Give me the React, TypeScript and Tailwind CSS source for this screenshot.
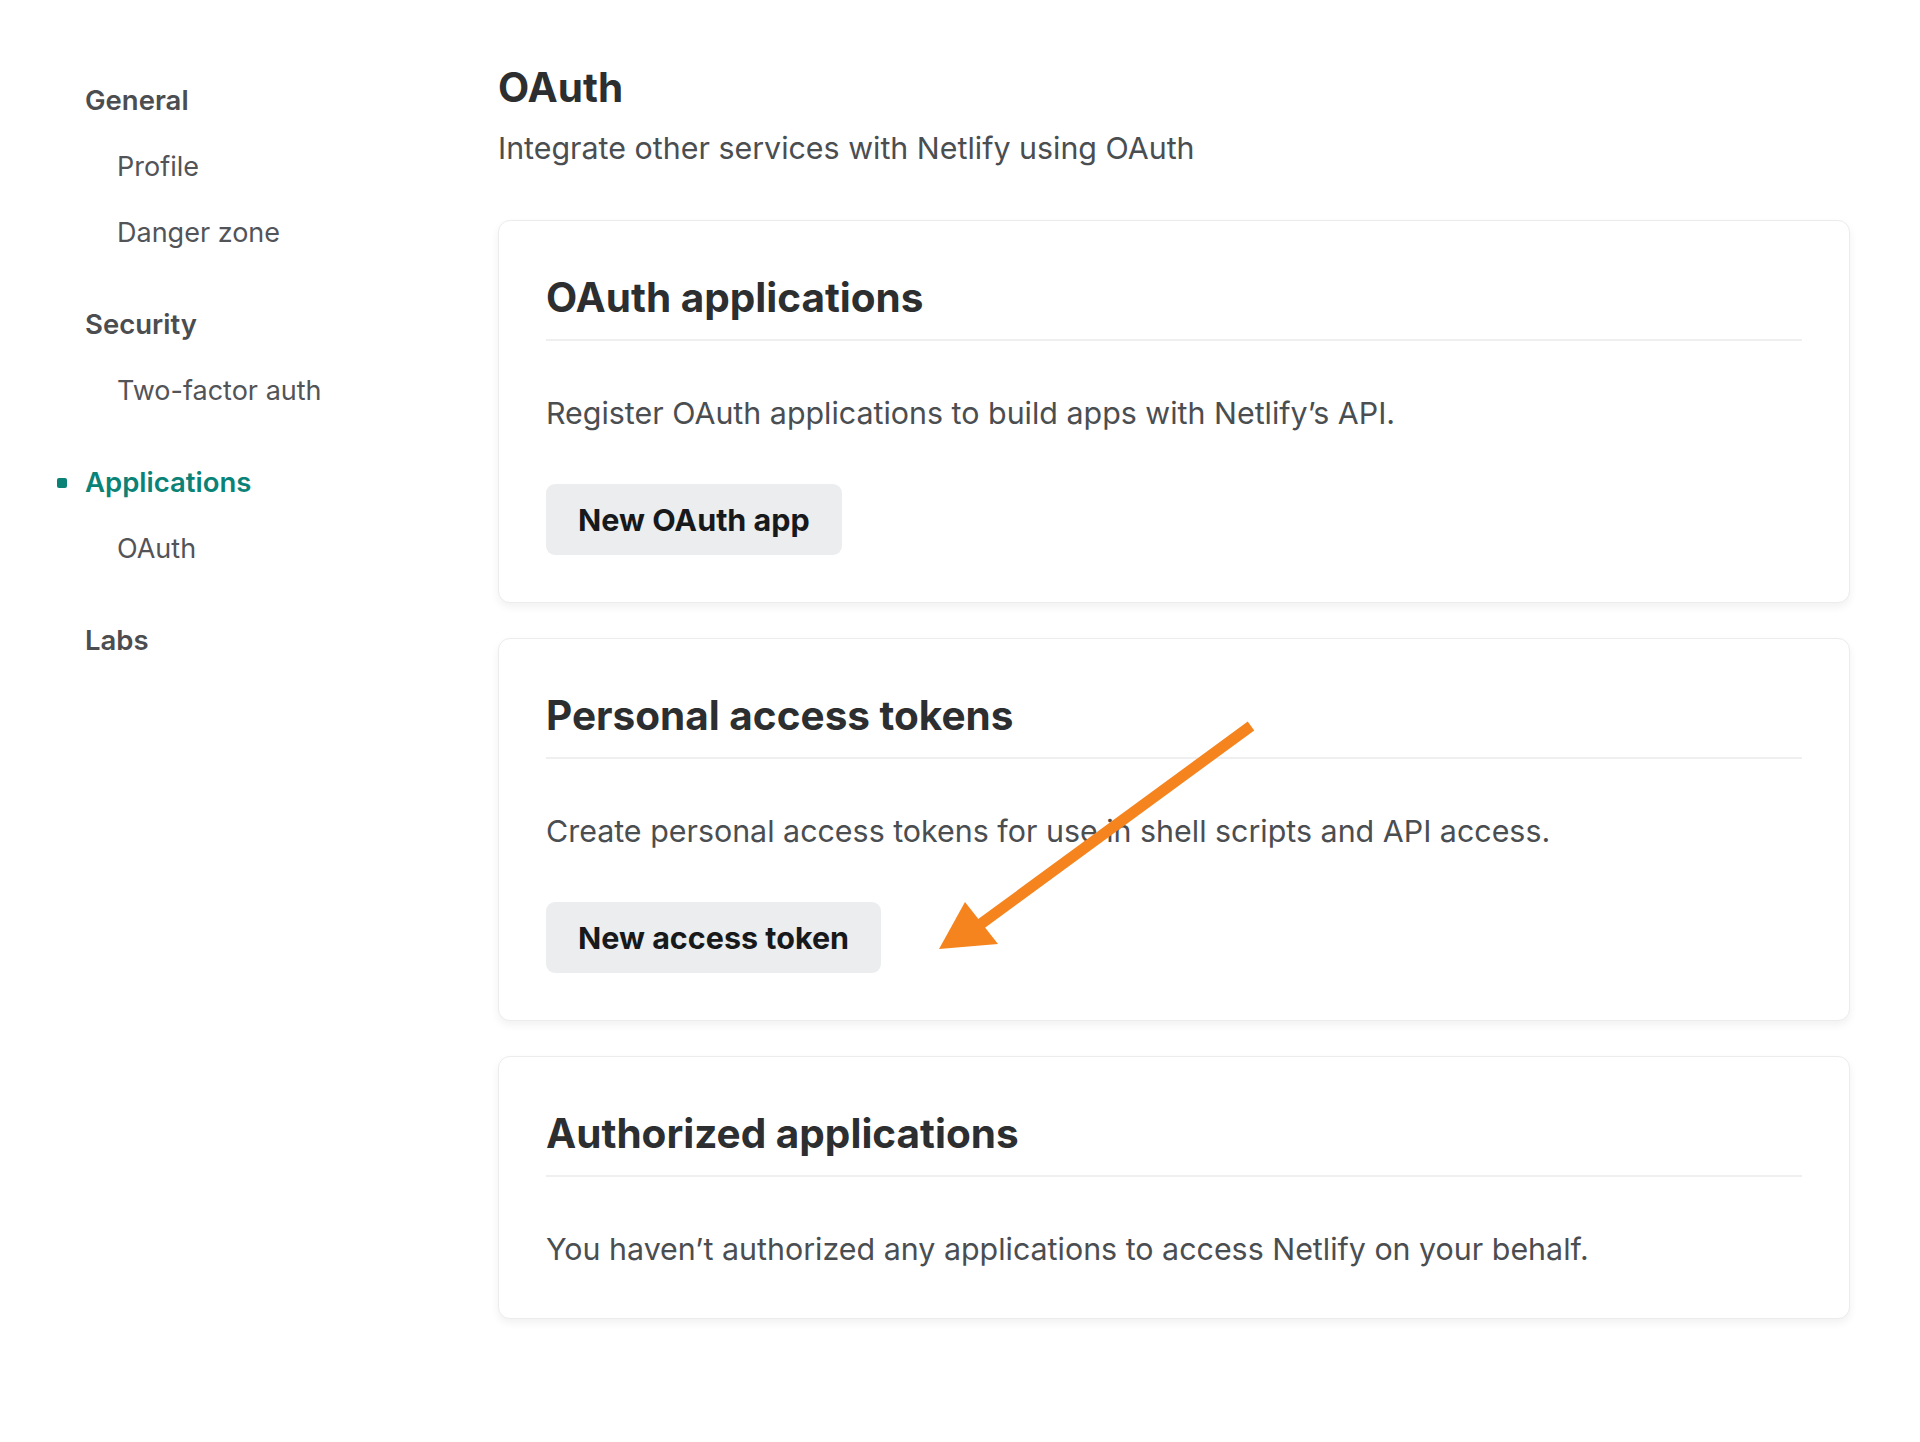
const nav = [
  { title: "General", items: ["Profile", "Danger zone"] },
  { title: "Security", items: ["Two-factor auth"] },
  { title: "Applications", items: ["OAuth"], active: true },
  { title: "Labs", items: [] as string[] },
];

const cards = [
  {
    title: "OAuth applications",
    text: "Register OAuth applications to build apps with Netlify\u2019s API.",
    button: "New OAuth app",
  },
  {
    title: "Personal access tokens",
    text: "Create personal access tokens for use in shell scripts and API access.",
    button: "New access token",
  },
  {
    title: "Authorized applications",
    text: "You haven\u2019t authorized any applications to access Netlify on your behalf.",
  },
];

function Sidebar() {
  return (
    <nav className="w-[498px] shrink-0 pl-[85px] pt-[81px]">
      {nav.map((group, i) => (
        <div key={group.title} className={i > 0 ? "mt-[52px]" : ""}>
          {group.active ? (
            <div className="-ml-[28px] flex h-10 items-center">
              <span className="mr-[18px] h-[10px] w-[10px] rounded-[2px] bg-[#0b8276]" />
              <span className="text-[27.5px] font-semibold text-[#0b8276]">{group.title}</span>
            </div>
          ) : (
            <div className="flex h-10 items-center text-[27.5px] font-semibold text-[#4b4d50]">
              {group.title}
            </div>
          )}
          {group.items.map((item) => (
            <div key={item} className="mt-[26px] flex h-10 items-center pl-[32px] text-[27px] text-[#525458]">
              {item}
            </div>
          ))}
        </div>
      ))}
    </nav>
  );
}

function Card({ title, text, button }: { title: string; text: string; button?: string }) {
  return (
    <section className="rounded-[12px] border border-[#ececec] bg-white px-[47px] pb-[47px] pt-[53px] shadow-[0_4px_8px_rgba(0,0,0,0.06)]">
      <h2 className="border-b-2 border-[#efefef] pb-[17px] text-[40.5px] font-bold leading-[48px] text-[#2c2e30]">
        {title}
      </h2>
      <p className="mt-[50px] text-[30.4px] leading-[44px] text-[#4b4e51]">{text}</p>
      {button && (
        <button className="mt-[49px] h-[71px] rounded-[9px] bg-[#ebedef] px-[32px] text-[30.5px] font-bold text-[#17191b]">
          {button}
        </button>
      )}
    </section>
  );
}

function Arrow() {
  return (
    <svg className="pointer-events-none absolute left-0 top-0" width="1920" height="1442">
      <line x1="1251" y1="726" x2="978" y2="926" stroke="#f5841f" strokeWidth="11" />
      <polygon points="939,949 965,902 998,944" fill="#f5841f" />
    </svg>
  );
}

export default function App() {
  return (
    <div className="relative h-[1442px] w-[1920px] overflow-hidden bg-white font-['Inter',sans-serif]">
      <div className="flex items-start">
        <Sidebar />
        <main className="w-[1352px] pt-[64px]">
          <h1 className="text-[40.5px] font-bold leading-[48px] text-[#2c2e30]">OAuth</h1>
          <p className="mt-[16px] text-[30.4px] leading-[40px] text-[#4b4e51]">
            Integrate other services with Netlify using OAuth
          </p>
          <div className="mt-[52px] flex flex-col gap-[35px]">
            {cards.map((c) => (
              <Card key={c.title} {...c} />
            ))}
          </div>
        </main>
      </div>
      <Arrow />
    </div>
  );
}
